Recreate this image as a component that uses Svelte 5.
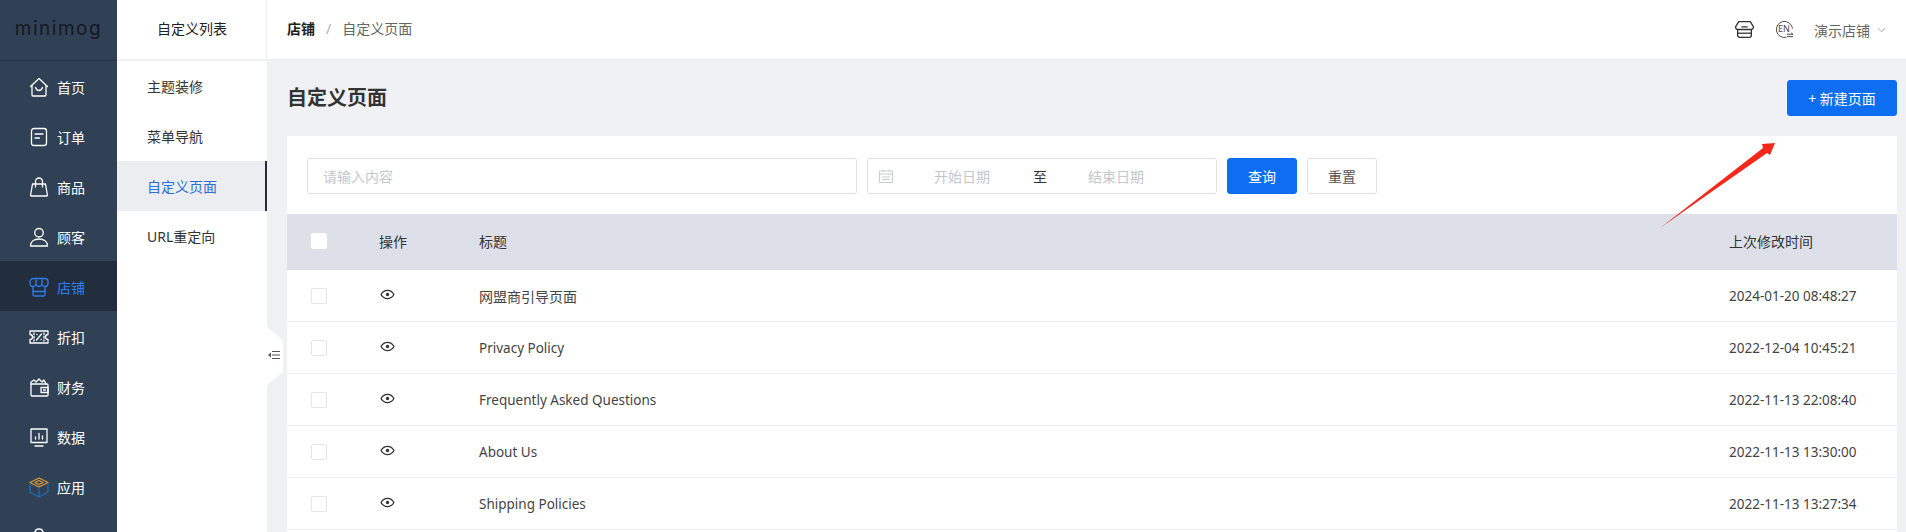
<script>
  const nav = [
    { label: '首页', paths: ['M2.500 10.500 11 2.500l8.500 8', 'M4 9.500V19a1 1 0 0 0 1 1h12a1 1 0 0 0 1-1V9.500', 'M7.500 11.500c.7 2 2.100 3 3.500 3s2.800-1 3.500-3'] },
    { label: '订单', paths: ['M6 2.500h10A2.500 2.500 0 0 1 18.500 5v12a2.500 2.500 0 0 1-2.500 2.500H6A2.500 2.500 0 0 1 3.500 17V5A2.500 2.500 0 0 1 6 2.500z', 'M7 8h8', 'M7 12h4.500'] },
    { label: '商品', paths: ['M4.500 8h13l2 11.500a.6.6 0 0 1-.6.5H3.100a.6.6 0 0 1-.6-.5z', 'M7.500 11V5.500a3.500 3.500 0 0 1 7 0V11'] },
    { label: '顾客', paths: ['M11 11a4.250 4.250 0 1 0 0-8.500 4.250 4.250 0 0 0 0 8.500z', 'M2.500 20c0-4.500 3.800-7 8.500-7s8.500 2.500 8.500 7z'] },
    { label: '店铺', active: true, paths: ['M5 2.500h12a3 3 0 0 1 3 3v2c0 2-1.500 3-3 3s-2.500-1-3-2c-.5 1-1.700 2-3 2s-2.500-1-3-2c-.5 1-1.500 2-3 2s-3-1-3-3v-2a3 3 0 0 1 3-3z', 'M8 4v4.500M14 4v4.500', 'M5 11v7.500A1.500 1.500 0 0 0 6.500 20h9a1.500 1.500 0 0 0 1.500-1.500V11', 'M5 15.500h12'] },
    { label: '折扣', paths: ['M2 5h18v3.500a2.500 2.500 0 0 0 0 5V17H2v-3.500a2.500 2.500 0 0 0 0-5z', 'M6 7v1.500M6 10.500v1.500M6 14v1', 'M16 7v1.500M16 10.500v1.500M16 14v1', 'M8.500 14l5-6', 'M9 8.500h.1M13 13.500h.1'] },
    { label: '财务', paths: ['M3 8h16a1 1 0 0 1 1 1v10a1 1 0 0 1-1 1H4a1 1 0 0 1-1-1z', 'M3 8V6l3-2 2 2 3-3 3 3 2-2 2 4', 'M13 11.500h7v5h-7z', 'M15.500 14h2'] },
    { label: '数据', paths: ['M3 3h16v13.500H3z', 'M7 20h8', 'M7.500 13v-2M11 13V7.500M14.500 13V10'] },
    { label: '应用', paths: [], box: true },
    { label: '', paths: ['M11 3a4 4 0 0 0-4 3L4 8v6l7 5 7-5V8l-3-2a4 4 0 0 0-4-3z'] }
  ];

  const subNav = ['主题装修', '菜单导航', '自定义页面', 'URL重定向'];

  const rows = [
    ['网盟商引导页面', '2024-01-20 08:48:27'],
    ['Privacy Policy', '2022-12-04 10:45:21'],
    ['Frequently Asked Questions', '2022-11-13 22:08:40'],
    ['About Us', '2022-11-13 13:30:00'],
    ['Shipping Policies', '2022-11-13 13:27:34']
  ];

  const isLatin = (text) => /^[\x00-\x7f]+$/.test(text);
</script>

<div class="shell">
  <aside class="side">
    <div class="logo">minimog</div>
    <nav class="side-list">
      {#each nav as item}
        <div class="side-item" class:active={item.active}>
          <svg class="side-icon" viewBox="0 0 22 22" fill="none" stroke="currentColor" stroke-width="1.300" stroke-linejoin="round" stroke-linecap="round">
            {#if item.box}
              <path d="M11 2 20 6.500 11 11 2 6.500z" stroke="#d79a3c" />
              <path d="M7 6.500 11 4.500l4 2-4 2z" stroke="#d79a3c" />
              <path d="M2 8.500V16l9 5 9-5V8.500M11 13v8" stroke="#1b6fb5" />
            {:else}
              {#each item.paths as d}
                <path {d} />
              {/each}
            {/if}
          </svg>
          <span>{item.label}</span>
        </div>
      {/each}
    </nav>
  </aside>

  <div class="sub">
    <div class="sub-title">自定义列表</div>
    {#each subNav as label, i}
      <div class="sub-item" class:current={i === 2}>{label}</div>
    {/each}
  </div>

  <div class="main">
    <header class="top">
      <div class="crumbs">
        <b>店铺</b>
        <i>/</i>
        <span>自定义页面</span>
      </div>
      <div class="top-right">
        <svg class="top-icon" viewBox="1 1 18 18" fill="none" stroke="#333" stroke-width="1.200" stroke-linejoin="round">
          <path d="M4.500 2.500h11l3 5c0 1.500-1 2.500-2 2.500H3.500c-1 0-2-1-2-2.500z" />
          <path d="M3.500 10v5.500a2 2 0 0 0 2 2h9a2 2 0 0 0 2-2V10" />
          <path d="M3.500 13.500h13" />
          <path d="M7 7.500h6" />
        </svg>
        <span class="lang">
          <svg class="top-icon" viewBox="0 0 20 20" fill="none" stroke="#444" stroke-width="1">
            <path d="M12 18.200A8.500 8.500 0 1 1 18.400 9" />
            <path d="M12.500 15h6.500l-2-1.500M19 17.500h-6.500" />
          </svg>
          <em>EN</em>
        </span>
        <span class="shop">演示店铺</span>
        <svg class="chev" viewBox="0 0 10 6" fill="none" stroke="#999" stroke-width="1"><path d="M1 1l4 4 4-4" /></svg>
      </div>
    </header>

    <div class="content">
      <div class="title-row">
        <h1>自定义页面</h1>
        <button class="btn primary new">+ 新建页面</button>
      </div>

      <section class="card">
        <div class="filters">
          <div class="field search">请输入内容</div>
          <div class="field dates">
            <svg class="cal" viewBox="0 0 14 14" fill="none" stroke="#c8cbd2" stroke-width="1">
              <path d="M.5 2h13v11.500H.5zM.5 5h13M4 .5v2.500M10 .5v2.500M3 8h8M3 10.500h8" />
            </svg>
            <span class="date-val">开始日期</span>
            <span class="to">至</span>
            <span class="date-val">结束日期</span>
          </div>
          <button class="btn primary query">查询</button>
          <button class="btn reset">重置</button>
        </div>

        <div class="table">
          <div class="row head">
            <span class="check"></span>
            <span class="c-op">操作</span>
            <span class="c-title">标题</span>
            <span class="c-time">上次修改时间</span>
          </div>
          {#each rows as [title, time]}
            <div class="row">
              <span class="check"></span>
              <span class="c-op">
                <svg class="eye" viewBox="0 0 16 12" fill="none" stroke="#333" stroke-width="1.500">
                  <path d="M1 6c1.700-3 4-4.500 7-4.500S13.300 3 15 6c-1.700 3-4 4.500-7 4.500S2.700 9 1 6z" />
                  <circle cx="8" cy="6" r="1.800" fill="#333" stroke="none" />
                </svg>
              </span>
              <span class="c-title" class:latin={isLatin(title)}>{title}</span>
              <span class="c-time latin">{time}</span>
            </div>
          {/each}
        </div>
      </section>
    </div>

    <div class="fold">
      <svg viewBox="0 0 12 10" fill="none" stroke="#555" stroke-width="1.100">
        <path d="M4 1.500h8M4 5h8M4 8.500h8" />
        <path d="M0 5l3-2.500v5z" fill="#555" stroke="none" />
      </svg>
    </div>
  </div>

  <svg class="arrow" viewBox="0 0 116 86">
    <path d="M0 85 103 5 102 1 115 0 110 12 107 10z" fill="#f5281c" />
  </svg>
</div>

<style>
  :global(body) {
    margin: 0;
    background: #eff1f5;
  }

  .shell {
    position: relative;
    display: flex;
    height: 100vh;
    overflow: hidden;
    font-family: "Noto Sans", "Noto Sans CJK SC", sans-serif;
    font-size: 14px;
    color: #333;
  }

  .side {
    flex: 0 0 117px;
    background: #304156;
    color: #fff;
  }

  .logo {
    height: 60px;
    line-height: 58px;
    text-align: center;
    font-family: Inter, sans-serif;
    font-size: 19px;
    letter-spacing: 1.500px;
    color: #14181f;
    border-bottom: 1px solid #263445;
  }

  .side-item {
    display: flex;
    align-items: center;
    gap: 7px;
    height: 50px;
    padding: 2px 0 0 28px;
    box-sizing: border-box;
  }

  .side-item.active {
    background: #222e3d;
    color: #2f7bf0;
  }

  .side-icon {
    width: 22px;
    height: 22px;
    flex: none;
  }

  .sub {
    flex: 0 0 150px;
    background: #fff;
  }

  .sub-title {
    height: 59px;
    line-height: 58px;
    padding-left: 40px;
    color: #222;
    border-bottom: 2px solid #eff1f5;
    border-right: 1px solid #eee;
    box-sizing: content-box;
  }

  .sub-item {
    height: 50px;
    line-height: 52px;
    padding-left: 30px;
    box-sizing: border-box;
  }

  .sub-item.current {
    background: #ecedf0;
    color: #2a6fd8;
    border-right: 2px solid #222e3d;
  }

  .main {
    position: relative;
    flex: 1;
    min-width: 0;
  }

  .top {
    display: flex;
    align-items: center;
    justify-content: space-between;
    height: 59px;
    padding: 0 9px 0 20px;
    background: #fff;
    border-bottom: 1px solid #eaebee;
    box-sizing: content-box;
  }

  .crumbs {
    display: flex;
    align-items: center;
    margin-top: -3px;
  }

  .crumbs b {
    font-weight: 600;
    color: #222;
  }

  .crumbs i {
    margin: 0 11px;
    color: #aab0ba;
    font-style: normal;
  }

  .crumbs span {
    color: #666;
  }

  .top-right {
    display: flex;
    align-items: center;
    margin-right: 11px;
    color: #666;
  }

  .top-icon {
    width: 19px;
    height: 19px;
    display: block;
  }

  .lang {
    position: relative;
    margin: 0 20px 0 21px;
  }

  .lang em {
    position: absolute;
    left: 3px;
    top: 4px;
    font-size: 9px;
    line-height: 10px;
    font-style: normal;
    color: #444;
  }

  .chev {
    width: 9px;
    height: 6px;
    margin-left: 7px;
  }

  .content {
    padding: 20px 9px 0 20px;
  }

  .title-row {
    display: flex;
    justify-content: space-between;
    align-items: center;
    height: 36px;
    margin-bottom: 20px;
  }

  h1 {
    margin: -3px 0 0;
    font-size: 20px;
    font-weight: 700;
    color: #333;
  }

  .btn {
    height: 36px;
    padding: 0;
    border: 1px solid #e0e2e7;
    border-radius: 3px;
    background: #fff;
    color: #555;
    font: inherit;
  }

  .btn.primary {
    border-color: #0d6ef2;
    background: #0d6ef2;
    color: #fff;
  }

  .new {
    width: 110px;
  }

  .query,
  .reset {
    width: 70px;
    margin-left: 10px;
  }

  .card {
    padding-bottom: 40px;
    background: #fff;
  }

  .filters {
    display: flex;
    align-items: center;
    height: 78px;
    padding: 2px 20px 0;
    box-sizing: border-box;
  }

  .field {
    display: flex;
    align-items: center;
    height: 36px;
    border: 1px solid #e0e2e7;
    border-radius: 3px;
    box-sizing: border-box;
    color: #c4c7ce;
  }

  .search {
    width: 550px;
    padding-left: 15px;
  }

  .dates {
    width: 350px;
    margin-left: 10px;
    padding-left: 11px;
  }

  .cal {
    width: 14px;
    height: 14px;
    flex: none;
  }

  .date-val {
    width: 138px;
    text-align: center;
  }

  .to {
    width: 14px;
    margin-left: 2px;
    color: #333;
    flex: none;
  }

  .row {
    display: flex;
    align-items: center;
    height: 52px;
    border-bottom: 1px solid #ebedf0;
    box-sizing: border-box;
    color: #444;
  }

  .row.head {
    height: 56px;
    padding-bottom: 3px;
    background: #dee0e9;
    border-bottom: 0;
    color: #333;
  }

  .check {
    flex: none;
    width: 16px;
    height: 16px;
    margin: 0 52px 0 24px;
    border: 1px solid #e3e5e9;
    border-radius: 2px;
    box-sizing: border-box;
    background: #fff;
  }

  .head .check {
    border-color: #fff;
  }

  .c-op {
    flex: 0 0 100px;
  }

  .eye {
    display: block;
    width: 15px;
    height: 11px;
    margin: -2px 0 0 1px;
  }

  .c-title {
    flex: 1;
  }

  .c-time {
    flex: 0 0 168px;
  }

  .latin {
    font-size: 13.500px;
  }

  .fold {
    position: absolute;
    left: 0;
    top: 327px;
    width: 16px;
    height: 58px;
    background: #fff;
    clip-path: polygon(0 0, 100% 22%, 100% 78%, 0 100%);
  }

  .fold svg {
    position: absolute;
    left: 1px;
    top: 23px;
    width: 12px;
    height: 10px;
  }

  .arrow {
    position: absolute;
    left: 1660px;
    top: 143px;
    width: 116px;
    height: 86px;
  }
</style>
